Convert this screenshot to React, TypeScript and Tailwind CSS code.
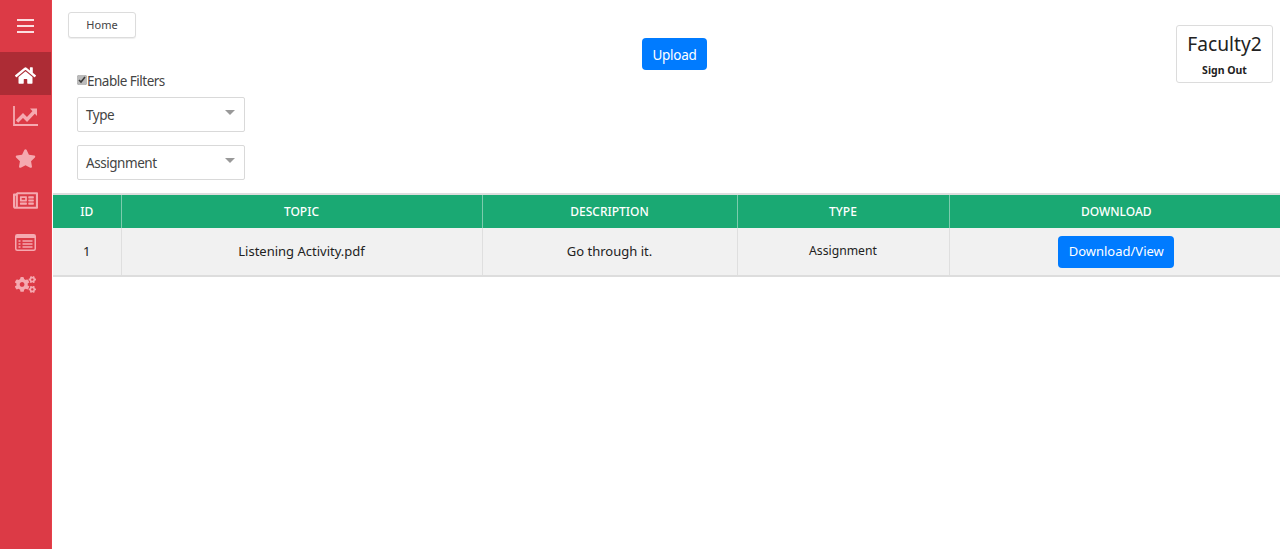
import { FaCogs, FaHome, FaRegNewspaper, FaStar } from "react-icons/fa";

function ChartIcon() {
  return (
    <svg width="25" height="20" viewBox="0 0 25 20" fill="none" stroke="currentColor">
      <path d="M1 0v19h24" strokeWidth="1.8" />
      <path d="M4 15.5l6-6 4 4 8-8.5" strokeWidth="3.4" />
      <path d="M17 2.5h7V10z" fill="currentColor" stroke="none" />
    </svg>
  );
}

function ListIcon() {
  return (
    <svg width="21" height="17" viewBox="0 0 21 17" fill="none" stroke="currentColor">
      <rect x="0.75" y="0.75" width="19.5" height="15.5" rx="1.5" strokeWidth="1.5" />
      <path d="M1 2.5h19" strokeWidth="3" />
      <path d="M3.5 7h2M7.5 7h10M3.5 10h2M7.5 10h10M3.5 13h2M7.5 13h10" strokeWidth="1.3" />
    </svg>
  );
}

function Dropdown({ label }: { label: string }) {
  return (
    <div className="flex h-[35px] w-[168px] items-center justify-between rounded-[2px] border border-[#d9d9d9] bg-white pl-2 pr-[9px] text-[13.5px] tracking-[-0.45px] text-[#444]">
      <span className="pt-px">{label}</span>
      <span className="mb-[5px] h-0 w-0 border-x-[5px] border-t-[5px] border-x-transparent border-t-[#999]" />
    </div>
  );
}

export default function App() {
  return (
    <div className="flex h-[549px] w-[1280px] overflow-hidden bg-white font-['Noto_Sans','Open_Sans',sans-serif] text-[#212529]">
      <aside className="flex w-[52px] shrink-0 flex-col items-center border-r border-[#e64049] bg-[#dc3a46]">
        <div className="flex h-[52px] w-full flex-col items-center justify-center gap-[4px]">
          <span className="h-[2px] w-[17px] bg-[#fbdfe1]" />
          <span className="h-[2px] w-[17px] bg-[#fbdfe1]" />
          <span className="h-[2px] w-[17px] bg-[#fbdfe1]" />
        </div>
        <div className="flex h-[43px] w-full items-center justify-center bg-[#ad2c35] pt-[3px] text-white">
          <FaHome size={21} />
        </div>
        <div className="flex h-[42px] w-full items-center justify-center text-[#f5a9b0]">
          <ChartIcon />
        </div>
        <div className="flex h-[42px] w-full items-center justify-center text-[#f5a9b0]">
          <FaStar size={21} />
        </div>
        <div className="flex h-[42px] w-full items-center justify-center text-[#f5a9b0]">
          <FaRegNewspaper size={25} />
        </div>
        <div className="flex h-[42px] w-full items-center justify-center text-[#f5a9b0]">
          <ListIcon />
        </div>
        <div className="flex h-[42px] w-full items-center justify-center text-[#f5a9b0]">
          <FaCogs size={21} />
        </div>
      </aside>

      <main className="min-w-0 flex-1 pl-px">
        <div className="flex h-[193px] items-start">
          <div className="w-[589px] shrink-0 pl-[15px] pt-[12px]">
            <button className="block h-[26px] w-[68px] rounded-[3px] border border-[#dcdcdc] bg-white text-[11px] text-[#444] shadow-[0_1px_1px_#eee]">
              Home
            </button>
            <div className="pl-[9px] pt-[33px]">
              <label className="flex h-[20px] items-center text-[13.5px] tracking-[-0.5px] text-[#444]">
                <input type="checkbox" defaultChecked className="m-0 mb-[3px] h-[10px] w-[10px] accent-[#bbb]" />
                Enable Filters
              </label>
              <div className="mt-[6px] flex flex-col gap-[13px]">
                <Dropdown label="Type" />
                <Dropdown label="Assignment" />
              </div>
            </div>
          </div>

          <button className="mt-[38px] h-[32px] w-[65px] rounded-[4px] bg-[#007bff] pt-[2px] text-[13.5px] tracking-[-0.3px] text-white">
            Upload
          </button>

          <div className="ml-auto mr-[7px] mt-[25px] flex h-[58px] w-[97px] flex-col items-center rounded-[3px] border border-[#dcdcdc] pt-[4px]">
            <span className="text-[19.2px] leading-[28px] text-[#222]">Faculty2</span>
            <span className="mt-[5px] text-[10.5px] font-bold leading-[14px] text-[#222]">Sign Out</span>
          </div>
        </div>

        <table className="w-[1227px] table-fixed border-y-2 border-[#dddddd] text-center text-[13px]">
          <thead>
            <tr className="h-[34px] bg-[#1aa973] text-[12px] text-white">
              <th className="w-[68px] border-r border-[#7ccbad] font-medium">ID</th>
              <th className="w-[361px] border-r border-[#7ccbad] font-medium">TOPIC</th>
              <th className="w-[255px] border-r border-[#7ccbad] font-medium">DESCRIPTION</th>
              <th className="w-[212px] border-r border-[#7ccbad] font-medium">TYPE</th>
              <th className="pl-[3px] font-medium">DOWNLOAD</th>
            </tr>
          </thead>
          <tbody>
            <tr className="h-[48px] bg-[#f1f1f1] text-[#222]">
              <td className="border-r border-[#dfdfdf]">1</td>
              <td className="border-r border-[#dfdfdf]">Listening Activity.pdf</td>
              <td className="border-r border-[#dfdfdf]">Go through it.</td>
              <td className="border-r border-[#dfdfdf] text-[12.2px]">Assignment</td>
              <td className="pl-[3px]">
                <button className="h-[32px] w-[116px] rounded-[4px] bg-[#007bff] text-[13px] text-white">
                  Download/View
                </button>
              </td>
            </tr>
          </tbody>
        </table>
      </main>
    </div>
  );
}
